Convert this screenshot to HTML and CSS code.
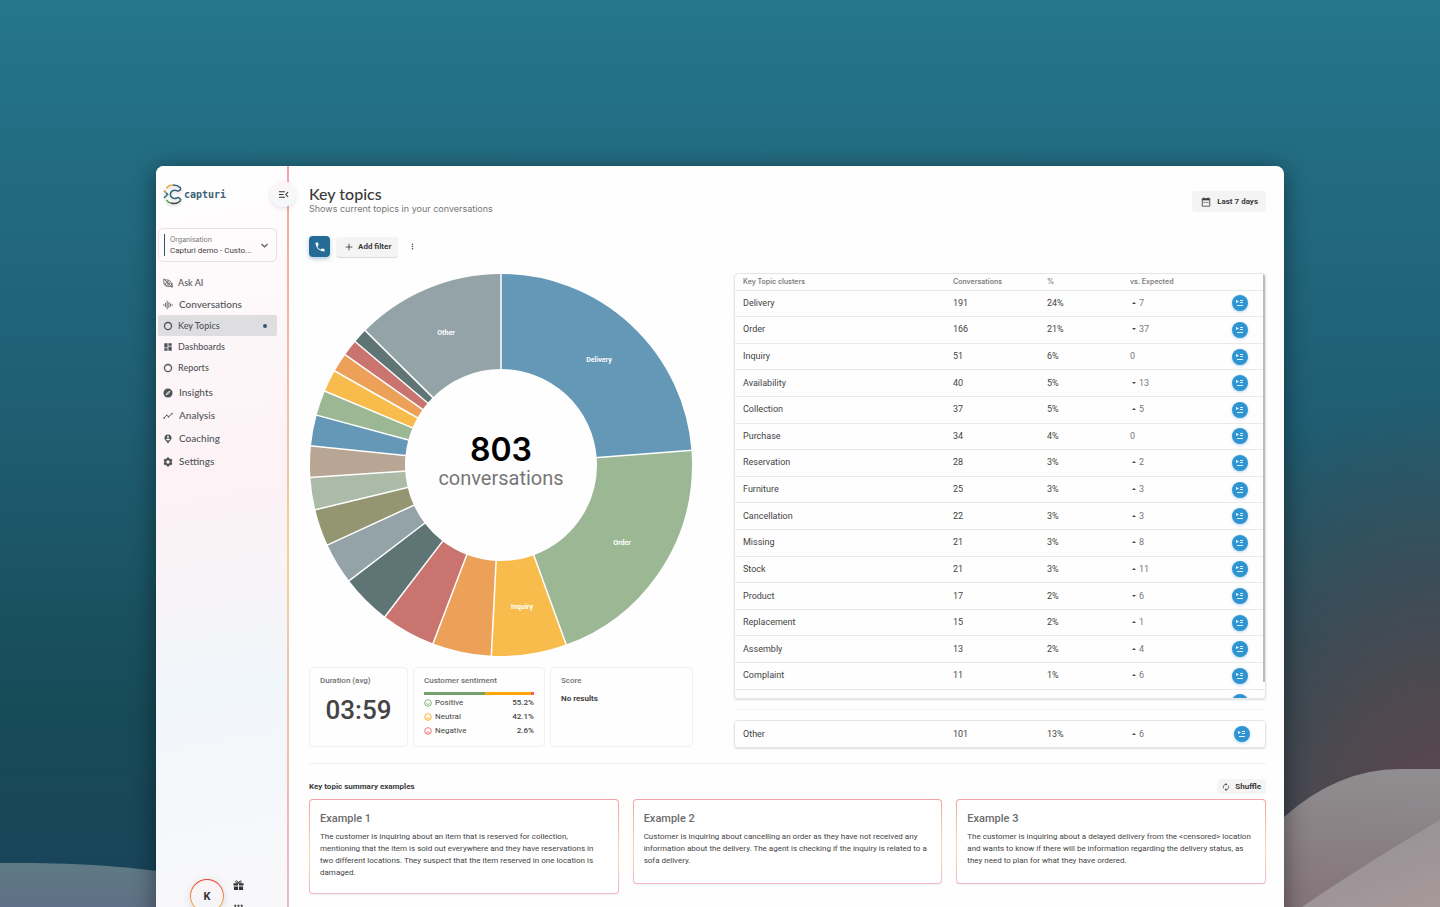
FILE: index.html
```html
<!DOCTYPE html>
<html lang="en">
<head>
<meta charset="utf-8">
<title>Key topics – Capturi</title>
<link rel="stylesheet" href="styles.css">
</head>
<body>
<svg class="symbols" aria-hidden="true">
  <symbol id="i-list" viewBox="0 0 8 8"><path d="M0 1v3l3-1.500z" fill="currentColor"/><path d="M4 1.500h3M4 3.500h3M1 6.500h6" stroke="currentColor" stroke-width="1" fill="none" opacity=".85"/></symbol>
  <symbol id="i-ring" viewBox="0 0 24 24"><circle cx="12" cy="12" r="8.500" fill="none" stroke="currentColor" stroke-width="3.200"/></symbol>
</svg>
<svg class="hill hill-left" viewBox="0 0 200 50" aria-hidden="true">
  <defs><linearGradient id="hl" x1="0" y1="0" x2="0" y2="1"><stop offset="0" stop-color="#5e7a84"/><stop offset="1" stop-color="#5f7086"/></linearGradient></defs>
  <path d="M0 6C60 6 110 6 200 20V50H0Z" fill="url(#hl)"/>
</svg>
<svg class="hill hill-right" viewBox="0 0 200 160" aria-hidden="true">
  <defs>
    <linearGradient id="h1" x1="0.4" y1="0" x2="0.3" y2="1"><stop offset="0" stop-color="#8f8d8f"/><stop offset="1" stop-color="#84747a"/></linearGradient>
    <linearGradient id="h2" x1="0.3" y1="0.2" x2="0.8" y2="1"><stop offset="0" stop-color="#979294"/><stop offset="1" stop-color="#a5989b"/></linearGradient>
  </defs>
  <path d="M0 110Q20 92 44 70Q98 22 160 22H200V160H0Z" fill="url(#h1)"/>
  <path d="M62 160Q120 120 200 73V160Z" fill="url(#h2)"/>
</svg>

<div class="app">
  <aside class="sidebar">
    <div class="brand">
      <svg class="brand-mark" viewBox="0 0 60 60" fill="none" stroke-width="4.500" aria-hidden="true">
        <path d="M10 13C14 7 22 3 30 3" stroke="#e9a93a"/>
        <path d="M30 3Q43 3 52 11Q55 15 50 19Q46 23 41 20C33 16 22 21 22 31C22 41 33 46 41 42Q46 39 50 43Q55 47 52 51" stroke="#2c6178"/>
        <path d="M3 20L14 31L3 42" stroke="#2c6f80"/>
        <path d="M3 20L9 26" stroke="#e9a93a"/>
        <path d="M52 51C44 58 34 60 24 57" stroke="#384a50"/>
        <path d="M10 48Q15 55 24 57" stroke="#6c9a66"/>
      </svg>
      <span class="brand-name">capturi</span>
      <button class="collapse" type="button" aria-label="Collapse menu">
        <svg viewBox="0 0 24 24" fill="none" stroke="currentColor" stroke-width="2.200"><path d="M2 6h13M2 12h10M2 18h13M22 7l-5 5 5 5"/></svg>
      </button>
    </div>
    <div class="org">
      <div class="org-text">
        <label for="org">Organisation</label>
        <select id="org"><option>Capturi demo - Custo...</option></select>
      </div>
      <svg class="chevron" viewBox="0 0 24 24" fill="none" stroke="currentColor" stroke-width="3" aria-hidden="true"><path d="M4 8l8 8 8-8"/></svg>
    </div>
    <nav class="nav">
      <a href="#"><svg viewBox="0 0 24 24" fill="none" stroke="currentColor" stroke-width="2"><path d="M2 2v9c0 5 3 8 8 9M22 22V12"/><path d="M2 2c4 4 6 2 10 3 6 1 8 5 8 9 0 3 0 5 2 8-4-3-6-1-10-2-5-1-7-5-7-9"/><path d="M8 11c0-4 8-3 8 2s-6 4-6 1 3-3 3-1M5 5l13 14"/></svg>Ask AI</a>
      <a class="top" href="#"><svg viewBox="0 0 24 24" fill="none" stroke="currentColor" stroke-width="2"><path d="M2 10v4M6 7v10M10 2v20M14 5v14M18 8v8M22 10v4"/></svg>Conversations</a>
      <a class="active" href="#" aria-current="page"><svg viewBox="0 0 24 24"><use href="#i-ring"/></svg>Key Topics<span class="dot"></span></a>
      <a href="#"><svg viewBox="0 0 24 24" fill="currentColor"><path d="M3 3h8v10H3zM13 3h8v6h-8zM3 15h8v6H3zM13 11h8v10h-8z"/></svg>Dashboards</a>
      <a href="#"><svg viewBox="0 0 24 24"><use href="#i-ring"/></svg>Reports</a>
      <a class="top first" href="#"><svg viewBox="0 0 24 24"><circle cx="12" cy="12" r="11" fill="currentColor"/><path d="M18 6l-4 8-8 4 4-8z" fill="#fff"/><circle cx="12" cy="12" r="1.600" fill="currentColor"/></svg>Insights</a>
      <a class="top" href="#"><svg viewBox="0 0 24 24" fill="none" stroke="currentColor" stroke-width="2.200"><path d="M2 17l7-7 4 4 9-8"/><circle cx="2.500" cy="17" r="1"/><circle cx="9" cy="10" r="1"/><circle cx="13" cy="14" r="1"/><circle cx="21.500" cy="6.500" r="1"/></svg>Analysis</a>
      <a class="top" href="#"><svg viewBox="0 0 24 24"><path d="M12 1a8.500 8.500 0 0 0-8.500 8.500C3.500 15 9 17 12 23c3-6 8.500-8 8.500-13.500A8.500 8.500 0 0 0 12 1z" fill="currentColor"/><circle cx="12" cy="6.500" r="2.300" fill="#fff"/><path d="M7 13.500q5-6 10 0-5 4-10 0z" fill="#fff"/></svg>Coaching</a>
      <a class="top" href="#"><svg viewBox="0 0 24 24" fill="none" stroke="currentColor"><circle cx="12" cy="12" r="6.500" stroke-width="5"/><path d="M12 1v4M12 19v4M2.500 6.500l3.500 2M18 15.500l3.500 2M2.500 17.500l3.500-2M18 8.500l3.500-2" stroke-width="5"/></svg>Settings</a>
    </nav>
    <div class="side-foot">
      <button class="avatar" type="button">K</button>
      <div class="foot-icons">
        <svg viewBox="0 0 24 24"><path d="M1 7h10v5H1zM13 7h10v5H13zM2 14h9v8H2zM13 14h9v8h-9z" fill="currentColor"/><path d="M12 7C4 7 5 1 8 2q3 1 4 5 1-4 4-5c3-1 4 5-4 5z" fill="none" stroke="currentColor" stroke-width="2"/></svg>
        <svg viewBox="0 0 24 24"><path d="M3 4h4v4H3zM10 4h4v4h-4zM17 4h4v4h-4zM3 10h18v10H3z" fill="currentColor"/></svg>
      </div>
    </div>
  </aside>

  <main class="main">
    <header class="head">
      <div>
        <h1>Key topics</h1>
        <p class="sub">Shows current topics in your conversations</p>
      </div>
      <button class="btn range" type="button"><svg viewBox="0 0 24 24" fill="none" stroke="currentColor" stroke-width="2"><path d="M3 4h18v18H3z"/><path d="M3 6h18" stroke-width="4"/><path d="M7 1v4M17 1v4"/><path d="M6 13h3M10.500 13h3M15 13h3"/></svg>Last 7 days</button>
    </header>

    <div class="toolbar">
      <button class="call" type="button" aria-label="Calls"><svg viewBox="0 0 24 24" fill="currentColor"><path d="M6.600 10.800a15 15 0 0 0 6.600 6.600l2.200-2.200c.3-.3.700-.4 1-.2 1.100.4 2.300.6 3.600.6.600 0 1 .4 1 1V20c0 .6-.4 1-1 1A17 17 0 0 1 3 4c0-.6.400-1 1-1h3.500c.6 0 1 .4 1 1 0 1.300.2 2.500.6 3.600.1.300 0 .7-.3 1z"/></svg></button>
      <button class="btn add" type="button"><svg viewBox="0 0 24 24" fill="none" stroke="currentColor" stroke-width="2.500"><path d="M12 2v20M2 12h20"/></svg>Add filter</button>
      <button class="more" type="button" aria-label="More"><svg viewBox="0 0 24 24" fill="currentColor"><circle cx="12" cy="4" r="2.600"/><circle cx="12" cy="12" r="2.600"/><circle cx="12" cy="20" r="2.600"/></svg></button>
    </div>

    <div class="overview">
      <section class="left">
        <svg class="donut" viewBox="0 0 384 384" role="img" aria-label="803 conversations by topic">
          <g class="arcs" transform="rotate(-90 192 192)">
            <circle cx="192" cy="192" r="143.500" pathLength="803" stroke="#94a3a8" stroke-dasharray="101 702" stroke-dashoffset="-702"/>
            <circle cx="192" cy="192" r="143.500" pathLength="803" stroke="#6498b6" stroke-dasharray="191 612"/>
            <circle cx="192" cy="192" r="143.500" pathLength="803" stroke="#9bb794" stroke-dasharray="166 637" stroke-dashoffset="-191"/>
            <circle cx="192" cy="192" r="143.500" pathLength="803" stroke="#f8bc4d" stroke-dasharray="51 752" stroke-dashoffset="-357"/>
            <circle cx="192" cy="192" r="143.500" pathLength="803" stroke="#eca058" stroke-dasharray="40 763" stroke-dashoffset="-408"/>
            <circle cx="192" cy="192" r="143.500" pathLength="803" stroke="#c9746e" stroke-dasharray="37 766" stroke-dashoffset="-448"/>
            <circle cx="192" cy="192" r="143.500" pathLength="803" stroke="#5f7575" stroke-dasharray="34 769" stroke-dashoffset="-485"/>
            <circle cx="192" cy="192" r="143.500" pathLength="803" stroke="#94a3a8" stroke-dasharray="28 775" stroke-dashoffset="-519"/>
            <circle cx="192" cy="192" r="143.500" pathLength="803" stroke="#949672" stroke-dasharray="25 778" stroke-dashoffset="-547"/>
            <circle cx="192" cy="192" r="143.500" pathLength="803" stroke="#abbba8" stroke-dasharray="22 781" stroke-dashoffset="-572"/>
            <circle cx="192" cy="192" r="143.500" pathLength="803" stroke="#b8a593" stroke-dasharray="21 782" stroke-dashoffset="-594"/>
            <circle cx="192" cy="192" r="143.500" pathLength="803" stroke="#6498b6" stroke-dasharray="21 782" stroke-dashoffset="-615"/>
            <circle cx="192" cy="192" r="143.500" pathLength="803" stroke="#9bb794" stroke-dasharray="17 786" stroke-dashoffset="-636"/>
            <circle cx="192" cy="192" r="143.500" pathLength="803" stroke="#f8bc4d" stroke-dasharray="15 788" stroke-dashoffset="-653"/>
            <circle cx="192" cy="192" r="143.500" pathLength="803" stroke="#eca058" stroke-dasharray="13 790" stroke-dashoffset="-668"/>
            <circle cx="192" cy="192" r="143.500" pathLength="803" stroke="#c9746e" stroke-dasharray="11 792" stroke-dashoffset="-681"/>
            <circle cx="192" cy="192" r="143.500" pathLength="803" stroke="#5f7575" stroke-dasharray="10 793" stroke-dashoffset="-692"/>
          </g>
          <g class="gaps" transform="rotate(-90 192 192)">
            <path d="M286 192h98"/>
            <path d="M286 192h98" transform="rotate(85.630 192 192)"/>
            <path d="M286 192h98" transform="rotate(160.050 192 192)"/>
            <path d="M286 192h98" transform="rotate(182.910 192 192)"/>
            <path d="M286 192h98" transform="rotate(200.850 192 192)"/>
            <path d="M286 192h98" transform="rotate(217.430 192 192)"/>
            <path d="M286 192h98" transform="rotate(232.680 192 192)"/>
            <path d="M286 192h98" transform="rotate(245.230 192 192)"/>
            <path d="M286 192h98" transform="rotate(256.440 192 192)"/>
            <path d="M286 192h98" transform="rotate(266.300 192 192)"/>
            <path d="M286 192h98" transform="rotate(275.720 192 192)"/>
            <path d="M286 192h98" transform="rotate(285.130 192 192)"/>
            <path d="M286 192h98" transform="rotate(292.750 192 192)"/>
            <path d="M286 192h98" transform="rotate(299.480 192 192)"/>
            <path d="M286 192h98" transform="rotate(305.310 192 192)"/>
            <path d="M286 192h98" transform="rotate(310.240 192 192)"/>
            <path d="M286 192h98" transform="rotate(314.720 192 192)"/>
          </g>
          <g class="slice-names"><text x="290" y="89">Delivery</text><text x="313" y="272">Order</text><text x="213" y="336">Inquiry</text><text x="137" y="62">Other</text></g>
          <text class="total" x="192" y="188">803</text>
          <text class="total-unit" x="192" y="212">conversations</text>
        </svg>
        <div class="stats">
          <article class="stat"><h2>Duration (avg)</h2><p class="time">03:59</p></article>
          <article class="stat">
            <h2>Customer sentiment</h2>
            <div class="bar"><i class="pos" style="width:55.2%"></i><i class="neu" style="width:42.1%"></i><i class="neg"></i></div>
            <ul class="moods">
              <li><svg class="c-pos" viewBox="0 0 24 24"><circle cx="12" cy="12" r="10"/><path d="M8 9v1M16 9v1M7 14q5 5 10 0"/></svg>Positive<b>55.2%</b></li>
              <li><svg class="c-neu" viewBox="0 0 24 24"><circle cx="12" cy="12" r="10"/><path d="M8 9v1M16 9v1M7 16h10"/></svg>Neutral<b>42.1%</b></li>
              <li><svg class="c-neg" viewBox="0 0 24 24"><circle cx="12" cy="12" r="10"/><path d="M8 9v1M16 9v1M7 17q5-5 10 0"/></svg>Negative<b>2.6%</b></li>
            </ul>
          </article>
          <article class="stat"><h2>Score</h2><p class="none">No results</p></article>
        </div>
      </section>

      <section class="right">
        <div class="panel scroller">
          <table class="topics tall">
            <colgroup><col class="w-name"><col class="w-conv"><col class="w-pct"><col class="w-exp"><col class="w-act"></colgroup>
            <thead><tr><th>Key Topic clusters</th><th>Conversations</th><th>%</th><th>vs. Expected</th><th></th></tr></thead>
            <tbody>
              <tr><td>Delivery</td><td>191</td><td>24%</td><td class="up">7</td><td><button class="go" type="button" aria-label="Open Delivery"><svg><use href="#i-list"/></svg></button></td></tr>
              <tr><td>Order</td><td>166</td><td>21%</td><td class="down">37</td><td><button class="go" type="button" aria-label="Open Order"><svg><use href="#i-list"/></svg></button></td></tr>
              <tr><td>Inquiry</td><td>51</td><td>6%</td><td class="same">0</td><td><button class="go" type="button" aria-label="Open Inquiry"><svg><use href="#i-list"/></svg></button></td></tr>
              <tr><td>Availability</td><td>40</td><td>5%</td><td class="down">13</td><td><button class="go" type="button" aria-label="Open Availability"><svg><use href="#i-list"/></svg></button></td></tr>
              <tr><td>Collection</td><td>37</td><td>5%</td><td class="up">5</td><td><button class="go" type="button" aria-label="Open Collection"><svg><use href="#i-list"/></svg></button></td></tr>
              <tr><td>Purchase</td><td>34</td><td>4%</td><td class="same">0</td><td><button class="go" type="button" aria-label="Open Purchase"><svg><use href="#i-list"/></svg></button></td></tr>
              <tr><td>Reservation</td><td>28</td><td>3%</td><td class="up">2</td><td><button class="go" type="button" aria-label="Open Reservation"><svg><use href="#i-list"/></svg></button></td></tr>
              <tr><td>Furniture</td><td>25</td><td>3%</td><td class="up">3</td><td><button class="go" type="button" aria-label="Open Furniture"><svg><use href="#i-list"/></svg></button></td></tr>
              <tr><td>Cancellation</td><td>22</td><td>3%</td><td class="up">3</td><td><button class="go" type="button" aria-label="Open Cancellation"><svg><use href="#i-list"/></svg></button></td></tr>
              <tr><td>Missing</td><td>21</td><td>3%</td><td class="up">8</td><td><button class="go" type="button" aria-label="Open Missing"><svg><use href="#i-list"/></svg></button></td></tr>
              <tr><td>Stock</td><td>21</td><td>3%</td><td class="up">11</td><td><button class="go" type="button" aria-label="Open Stock"><svg><use href="#i-list"/></svg></button></td></tr>
              <tr><td>Product</td><td>17</td><td>2%</td><td class="down">6</td><td><button class="go" type="button" aria-label="Open Product"><svg><use href="#i-list"/></svg></button></td></tr>
              <tr><td>Replacement</td><td>15</td><td>2%</td><td class="up">1</td><td><button class="go" type="button" aria-label="Open Replacement"><svg><use href="#i-list"/></svg></button></td></tr>
              <tr><td>Assembly</td><td>13</td><td>2%</td><td class="up">4</td><td><button class="go" type="button" aria-label="Open Assembly"><svg><use href="#i-list"/></svg></button></td></tr>
              <tr><td>Complaint</td><td>11</td><td>1%</td><td class="up">6</td><td><button class="go" type="button" aria-label="Open Complaint"><svg><use href="#i-list"/></svg></button></td></tr>
              <tr><td>Exchange</td><td>10</td><td>1%</td><td class="up">4</td><td><button class="go" type="button" aria-label="Open Exchange"><svg><use href="#i-list"/></svg></button></td></tr>
            </tbody>
          </table>
        </div>
        <hr>
        <div class="panel">
          <table class="topics other">
            <colgroup><col class="w-name"><col class="w-conv"><col class="w-pct"><col class="w-exp"><col class="w-act"></colgroup>
            <tbody><tr><td>Other</td><td>101</td><td>13%</td><td class="up">6</td><td><button class="go" type="button" aria-label="Open Other"><svg><use href="#i-list"/></svg></button></td></tr></tbody>
          </table>
        </div>
      </section>
    </div>

    <section class="examples">
      <div class="ex-head">
        <h2>Key topic summary examples</h2>
        <button class="btn shuffle" type="button"><svg viewBox="0 0 24 24" fill="none" stroke="currentColor" stroke-width="2.200"><path d="M5 16A8 8 0 0 1 13 4M19 8A8 8 0 0 1 11 20"/><path d="M11 0v8l5-4zM13 24v-8l-5 4z" fill="currentColor" stroke="none"/></svg>Shuffle</button>
      </div>
      <div class="cards">
        <article class="card long"><h3>Example 1</h3><p>The customer is inquiring about an item that is reserved for collection,<br>mentioning that the item is sold out everywhere and they have reservations in<br>two different locations. They suspect that the item reserved in one location is<br>damaged.</p></article>
        <article class="card"><h3>Example 2</h3><p>Customer is inquiring about cancelling an order as they have not received any<br>information about the delivery. The agent is checking if the inquiry is related to a<br>sofa delivery.</p></article>
        <article class="card"><h3>Example 3</h3><p>The customer is inquiring about a delayed delivery from the &lt;censored&gt; location<br>and wants to know if there will be information regarding the delivery status, as<br>they need to plan for what they have ordered.</p></article>
      </div>
    </section>
  </main>
</div>
</body>
</html>
```

FILE: styles.css
```css
* { box-sizing: border-box; }
html, body { height: 100%; }
body {
  margin: 0;
  overflow: hidden;
  position: relative;
  font-family: Roboto, "Noto Sans", sans-serif;
  color: #444;
  background:
    radial-gradient(ellipse 340px 460px at 100% 94%, #5e464b 0, rgba(88, 72, 78, .85) 35%, rgba(88, 72, 78, 0) 100%),
    linear-gradient(180deg, #25768c 0, #226a80 20%, #1f5e73 45%, #174b58 78%, #19435a 100%);
}
h1, h2, h3, p, ul { margin: 0; padding: 0; }
button, select { font: inherit; color: inherit; border: 0; padding: 0; background: none; }
svg { display: block; flex: none; }
.symbols { position: absolute; width: 0; height: 0; }
.hill { position: absolute; bottom: 0; }
.hill-left { left: 0; width: 200px; }
.hill-right { right: 0; width: 200px; }

.app {
  position: relative;
  display: flex;
  margin: 0 156px;
  top: 166px;
  min-height: calc(100vh - 126px);
  border-radius: 8px 8px 0 0;
  background: #fefefe;
  box-shadow: 0 4px 24px rgba(0, 0, 0, .45);
}

/* sidebar */
.sidebar {
  flex: none;
  display: flex;
  flex-direction: column;
  width: 133px;
  padding: 13px 10px 33px 2px;
  border-right: 2px solid;
  border-image: linear-gradient(#f6a3a8, #f7cf96 50%, #f3b8b4 80%, #f3b6c6) 1;
  background: linear-gradient(170deg, #fff 0, #fdf6f8 25%, #fdf2f5 42%, #f1f6fa 66%, #f8f8fa 92%);
  border-radius: 8px 0 0 0;
  color: #50555a;
}
.brand { display: flex; align-items: center; height: 30px; padding-left: 5px; }
.brand-mark { width: 20px; height: 22px; filter: drop-shadow(0 2px 1px rgba(0, 0, 0, .15)); }
.brand-name { flex: 1; padding-left: 1px; font: 700 10px "DejaVu Sans Mono", monospace; color: #3d6177; }
.collapse {
  flex: none;
  display: grid;
  place-items: center;
  width: 26px;
  height: 26px;
  margin-right: -19px;
  border-radius: 50%;
  background: linear-gradient(160deg, #fff5f7, #f3f8fb);
  box-shadow: 0 2px 4px rgba(0, 0, 0, .1);
  color: #333;
  z-index: 1;
}
.collapse svg { width: 11px; height: 11px; }
.org {
  display: flex;
  align-items: center;
  height: 34px;
  margin-top: 19px;
  padding: 5px 7px 5px 5px;
  border: 1px solid #e6e3e7;
  border-radius: 5px;
}
.org-text { flex: 1; min-width: 0; padding: 1px 0 0 5px; border-left: 1px solid #2f566c; font-size: 8px; line-height: 11px; }
.org label { display: block; font: 7px/10px Inter, sans-serif; color: #777; }
.org select { display: block; width: 100%; appearance: none; color: #444; }
.chevron { width: 9px; height: 9px; }
.nav { margin-top: 10px; font: 500 9px/21px Lato, sans-serif; }
.nav a { display: flex; align-items: center; height: 21px; padding: 0 10px 0 5px; gap: 5px; color: inherit; text-decoration: none; border-radius: 2px; }
.nav svg { width: 10px; height: 10px; }
.nav .top { height: 23px; gap: 6px; font-size: 10px; }
.nav .top + .active { margin-top: -1px; }
.nav .first { margin-top: 3px; }
.nav .active { background: #dedddf; }
.dot { width: 4px; height: 4px; margin-left: auto; border-radius: 50%; background: #2c5a6e; }
.side-foot { display: flex; gap: 9px; margin-top: auto; padding-left: 32px; }
.avatar {
  width: 34px;
  height: 34px;
  border: 1px solid transparent;
  border-radius: 50%;
  background: linear-gradient(#fdf3f5, #f1f6fa) padding-box, linear-gradient(#e8413c, #f0a040 70%) border-box;
  box-shadow: 0 2px 8px rgba(0, 0, 0, .12);
  font-size: 11px;
  font-weight: 700;
  color: #333;
}
.foot-icons { display: grid; gap: 12px; align-content: start; padding-top: 1px; color: #333; }
.foot-icons svg { width: 11px; height: 11px; }

/* page head */
.main { flex: 1; min-width: 0; padding: 19px 18px 0 20px; }
.head { display: flex; justify-content: space-between; align-items: flex-start; height: 51px; }
h1 { font: 500 16px/18px Lato, sans-serif; color: #3a3a3a; }
.sub { font: 9px/12px Inter, sans-serif; color: #777; }
.btn { display: flex; align-items: center; border-radius: 4px; background: #f4f4f4; font-size: 8px; font-weight: 700; color: #3c3c3c; }
.range { height: 21px; margin-top: 6px; padding: 0 8px 0 9px; gap: 6px; }
.range svg { width: 10px; height: 10px; }
.toolbar { display: flex; align-items: center; gap: 6px; height: 21px; }
.call { display: grid; place-items: center; width: 21px; height: 21px; border-radius: 4px; background: #246b95; color: #fff; box-shadow: 0 2px 4px rgba(36, 107, 149, .35); }
.call svg { width: 12px; height: 12px; }
.add { height: 20px; padding: 0 7px 0 9px; gap: 5px; box-shadow: 0 1px 1px rgba(0, 0, 0, .15); }
.add svg { width: 8px; height: 8px; }
.more { width: 16px; display: grid; place-items: center; }
.more svg { width: 7px; height: 7px; }

/* overview */
.overview {
  display: grid;
  grid-template-columns: 384fr 532fr;
  gap: 41px;
  margin-top: 16px;
  padding-bottom: 15px;
  border-bottom: 1px solid #f1f1f1;
}
.donut { width: 100%; }
.arcs { fill: none; stroke-width: 95; }
.gaps { stroke: #fff; stroke-width: 1.5; }
.donut text { text-anchor: middle; }
.slice-names { font-size: 7px; font-weight: 700; fill: #fff; }
.total { font-family: Inter, sans-serif; font-size: 32px; font-weight: 600; fill: #000; }
.total-unit { font-size: 20px; fill: #777; }
.stats { display: grid; grid-template-columns: 99fr 132fr 143fr; gap: 5px; margin-top: 10px; }
.stat { height: 80px; padding: 8px 10px; border: 1px solid #f0f0f0; border-radius: 4px; }
h2 { font-size: 8px; line-height: 10px; font-weight: 500; color: #707070; }
.time { margin-top: 8px; font-size: 26px; line-height: 32px; font-weight: 500; text-align: center; color: #444; }
.none { margin-top: 8px; font-size: 8px; line-height: 10px; font-weight: 700; }
.bar { display: flex; height: 3px; margin-top: 6px; margin-bottom: 1px; }
.pos { background: #76a06c; }
.neu { background: #fba70d; }
.neg { flex: 1; background: #f45b5b; }
.moods { list-style: none; font-size: 8px; line-height: 14px; }
.moods li { display: flex; align-items: center; gap: 3px; }
.moods svg { width: 8px; height: 8px; fill: none; stroke-width: 2.5; }
.c-pos { stroke: #76a06c; }
.c-neu { stroke: #fba70d; }
.c-neg { stroke: #f45b5b; }
.moods b { margin-left: auto; font-weight: 500; }

/* topics */
.right { display: flex; flex-direction: column; }
.panel { border: 1px solid #e6e6e6; border-radius: 4px; box-shadow: 0 1px 2px rgba(0, 0, 0, .14); }
.scroller { position: relative; height: 426px; overflow: hidden; }
.scroller::after { content: ""; position: absolute; top: -1px; right: -1px; width: 3px; height: 409px; background: #bcbcbc; }
hr { width: 100%; height: 1px; margin: 10px 0; border: 0; background: #f3f3f3; }
.topics { width: 100%; table-layout: fixed; border-collapse: collapse; font-size: 9px; }
.tall { height: 441px; }
.topics th { height: 16px; padding: 0 8px; text-align: left; font: 600 7px Inter, sans-serif; white-space: nowrap; color: #808080; }
.topics td { padding: 0 8px; line-height: 15px; }
.topics td:nth-child(4) { color: #777; }
.tall td { border-top: 1px solid #e9e9e9; }
.other { height: 26px; }
.other td:last-child { padding-left: 10px; }
.w-name { width: 210px; }
.w-conv { width: 94px; }
.w-pct { width: 83px; }
.w-exp { width: 102px; }
.up::before, .down::before { content: ""; display: inline-block; margin: 0 3px 2px 2px; border: 2px solid transparent; }
.up::before { border-top-width: 0; border-bottom-color: #444; }
.down::before { border-bottom-width: 0; border-top-color: #444; }
.go { display: grid; place-items: center; width: 16px; height: 16px; border-radius: 50%; background: #2f94d2; color: #fff; box-shadow: 0 1px 3px rgba(47, 148, 210, .4); }
.go svg { width: 8px; height: 8px; }

/* examples */
.ex-head { display: flex; justify-content: space-between; align-items: center; height: 15px; margin-top: 15px; }
.ex-head h2 { color: #3c3c3c; font-weight: 700; }
.shuffle { height: 15px; padding: 0 5px; gap: 5px; }
.shuffle svg { width: 8px; height: 8px; }
.cards { display: grid; grid-template-columns: repeat(3, 1fr); align-items: start; gap: 14px; margin-top: 5px; }
.card {
  min-height: 85px;
  padding: 13px 10px 9px;
  border: 1px solid transparent;
  border-radius: 4px;
  background: linear-gradient(#fff, #fff) padding-box, linear-gradient(#f4a3a6, #f8dcb0 60%, #f0b8ca) border-box;
  box-shadow: 0 1px 2px rgba(0, 0, 0, .06);
}
.card.long { padding-bottom: 14px; }
h3 { font-size: 11px; line-height: 12px; font-weight: 500; color: #6c6c6c; }
.card p { margin-top: 6px; font-size: 8px; line-height: 12px; white-space: nowrap; color: #444; }
```
